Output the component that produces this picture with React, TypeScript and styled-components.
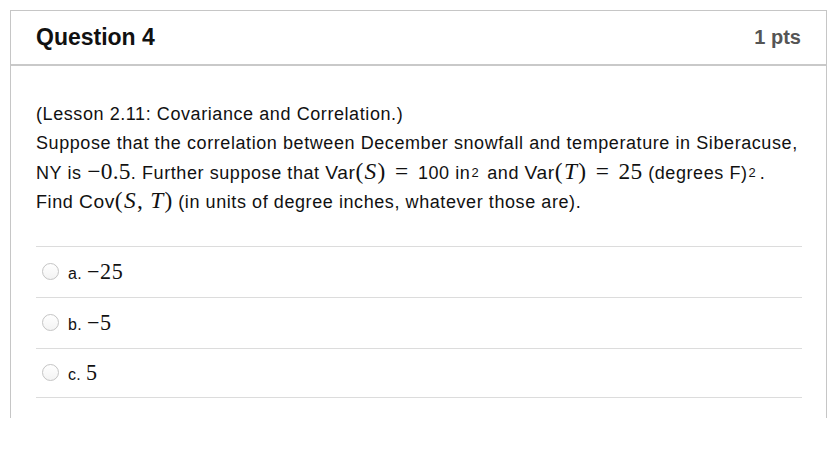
import React from 'react';
import styled, { createGlobalStyle } from 'styled-components';

const GlobalStyle = createGlobalStyle`
  html, body {
    margin: 0;
    padding: 0;
    background: #ffffff;
  }
  body {
    font-family: "Liberation Sans", Arial, sans-serif;
    color: #000;
  }
`;

const Page = styled.div`
  padding: 10px 13px 0 10px;
`;

const Card = styled.div`
  border: 1px solid #c6c6c6;
  border-bottom: none;
  height: 408px;
  box-sizing: border-box;
`;

const Header = styled.div`
  display: flex;
  justify-content: space-between;
  align-items: center;
  height: 55px;
  box-sizing: border-box;
  padding: 0 25px 0 25px;
  border-bottom: 2px solid #c9c9c9;
`;

const Title = styled.h2`
  margin: 0;
  font-size: 23px;
  font-weight: bold;
  color: #111;
`;

const Points = styled.span`
  font-size: 20px;
  font-weight: bold;
  color: #555;
`;

const Body = styled.div`
  padding: 34px 24px 0 25px;
`;

const Text = styled.p`
  margin: 0;
  font-size: 18px;
  letter-spacing: 0.58px;
  line-height: 29px;
  color: #111;
  white-space: nowrap;
`;

const Math = styled.span`
  font-family: "Liberation Serif", "Times New Roman", serif;
  font-size: 1.3em;
  letter-spacing: 0.3px;
  line-height: 1;
`;

const Mi = styled.i`
  font-family: "Liberation Serif", "Times New Roman", serif;
  margin: 0 1px;
`;

const Op = styled.span`
  margin: 0 0.4em;
`;

const Fn = styled.span`
  font-family: "Liberation Sans", Arial, sans-serif;
  font-size: 0.82em;
  letter-spacing: 0.6px;
`;

const Sup = styled.span<{ $gap?: number }>`
  font-size: 0.72em;
  letter-spacing: 0;
  vertical-align: 0.15em;
  margin-left: 1px;
  margin-right: ${({ $gap }) => $gap ?? 0}px;
`;

const Answers = styled.div`
  margin-top: 29px;
`;

const Answer = styled.label`
  display: flex;
  align-items: center;
  gap: 9px;
  height: 50px;
  padding-left: 6px;
  border-top: 1px solid #dcdcdc;
  font-size: 16px;
  letter-spacing: 0.3px;
  color: #111;

  &:last-child {
    height: 48px;
    border-bottom: 1px solid #dcdcdc;
  }
`;

const Radio = styled.span`
  width: 17px;
  height: 17px;
  box-sizing: border-box;
  border-radius: 50%;
  border: 1px solid #c4c4c4;
  background: linear-gradient(#ffffff, #f3f3f3);
`;

const AnswerMath = styled.span`
  font-family: "Liberation Serif", "Times New Roman", serif;
  font-size: 1.38em;
  letter-spacing: 0.6px;
  margin-left: 5px;
`;

const options = [
  { letter: 'a.', value: '\u221225' },
  { letter: 'b.', value: '\u22125' },
  { letter: 'c.', value: '5' },
];

export default function App() {
  return (
    <Page>
      <GlobalStyle />
      <Card>
        <Header>
          <Title>Question 4</Title>
          <Points>1 pts</Points>
        </Header>
        <Body>
          <Text>
            (Lesson 2.11: Covariance and Correlation.)
            <br />
            Suppose that the correlation between December snowfall and temperature in Siberacuse,
            <br />
            NY is <Math>{'\u22120.5'}</Math>. Further suppose that{' '}
            <Math>
              <Fn>Var</Fn>(<Mi>S</Mi>)<Op>=</Op>
            </Math>
            100 in<Sup $gap={3}>2</Sup> and{' '}
            <Math>
              <Fn>Var</Fn>(<Mi>T</Mi>)<Op>=</Op>25
            </Math>{' '}
            (degrees F)<Sup $gap={4}>2</Sup>.
            <br />
            Find{' '}
            <Math>
              <Fn>Cov</Fn>(<Mi>S</Mi>, <Mi>T</Mi>)
            </Math>{' '}
            (in units of degree inches, whatever those are).
          </Text>
          <Answers>
            {options.map((o) => (
              <Answer key={o.letter}>
                <Radio />
                <span>
                  {o.letter}
                  <AnswerMath>{o.value}</AnswerMath>
                </span>
              </Answer>
            ))}
          </Answers>
        </Body>
      </Card>
    </Page>
  );
}
